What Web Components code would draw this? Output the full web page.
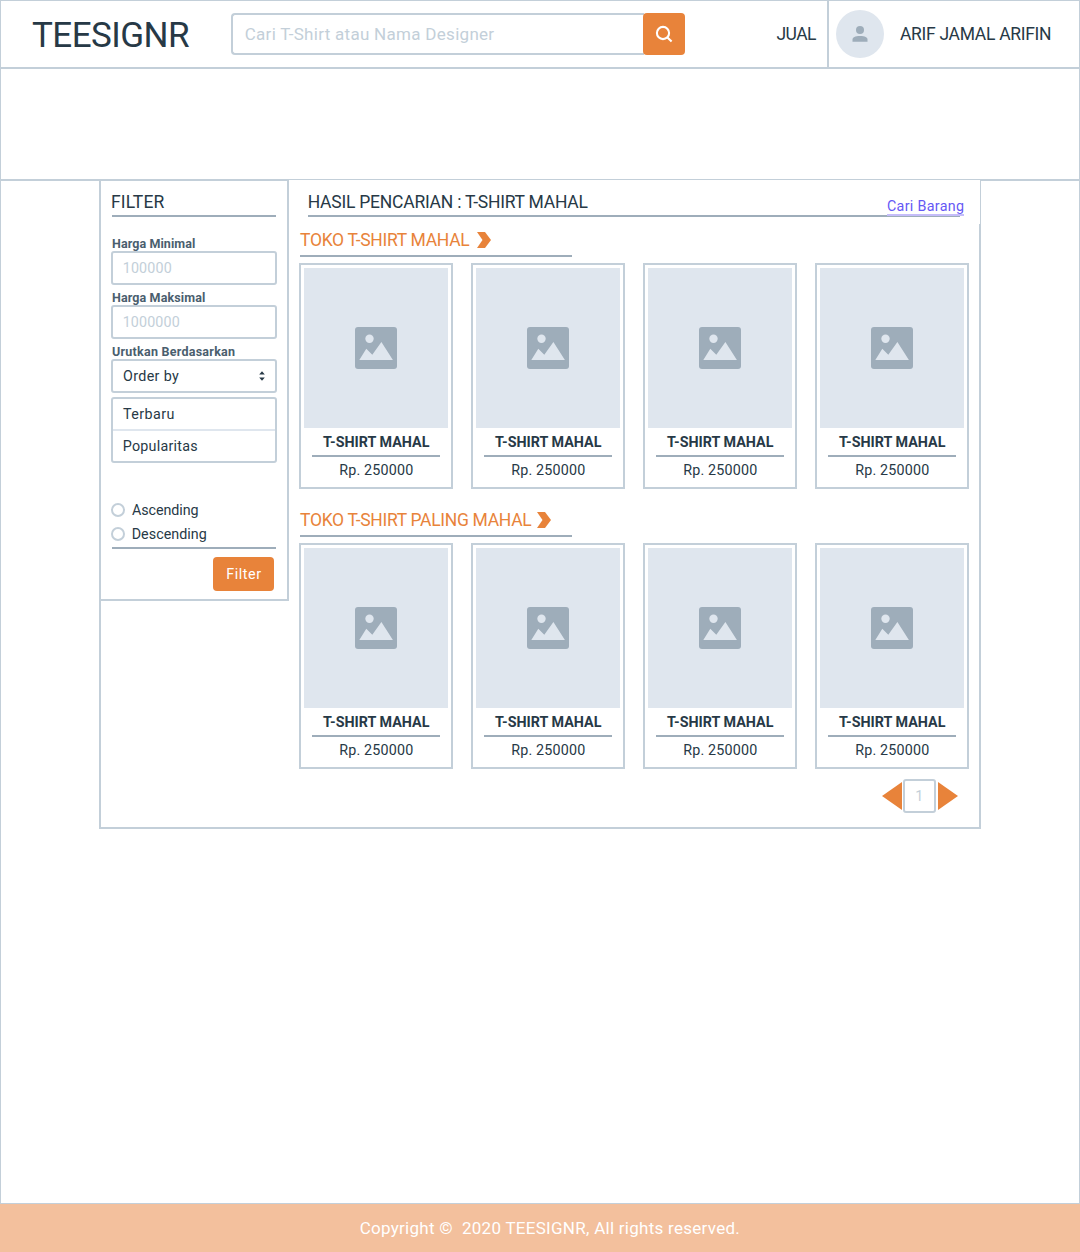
<!DOCTYPE html>
<html lang="id">
<head>
<meta charset="utf-8">
<title>TEESIGNR</title>
<style>
html,body{margin:0;padding:0;background:#fff}
body{font-family:Roboto,"Liberation Sans",sans-serif;color:#273946;
--line:#c3cfd9;--rule:#9eadba;--fill:#dfe6ee;--accent:#e8833a;--muted:#c3cfd9}
</style>
</head>
<body>
<tee-app></tee-app>
<script>
const ctx = document.createElement('canvas').getContext('2d');
const define = (name, html, setup) => customElements.define(name, class extends HTMLElement {
  connectedCallback() {
    if (this.shadowRoot) return;
    const root = this.attachShadow({mode: 'open'});
    const t = document.createElement('template');
    t.innerHTML = '<style>*{box-sizing:border-box}:host{display:block;box-sizing:border-box}</style>' + (typeof html === 'function' ? html(this) : html);
    root.append(t.content.cloneNode(true));
    if (setup) setup(this, root);
  }
});

/* Single-line text, tracked so that its ink fills the width in "w". */
define('ui-text', '<style>:host{flex:none;white-space:pre;line-height:20px;height:20px}span{display:inline-block}</style><span></span>', (el, root) => {
  const size = +el.getAttribute('size') || 14, weight = el.getAttribute('weight') || 400, w = +el.getAttribute('w');
  const s = el.getAttribute('text'), span = root.querySelector('span');
  ctx.font = `${weight} ${size}px Roboto`;
  const m = ctx.measureText(s), ink = m.actualBoundingBoxRight + m.actualBoundingBoxLeft;
  span.textContent = s;
  el.style.width = w + 'px';
  el.style.fontSize = size + 'px';
  el.style.fontWeight = weight;
  if (s.length > 1) span.style.letterSpacing = (w - ink) / (s.length - 1) + 'px';
  const nudge = weight == 400 && size < 20 && /^[HDPRC1F]/.test(s) && s !== 'FILTER' && s !== 'Cari Barang' ? 0.7 : 0;
  span.style.marginLeft = m.actualBoundingBoxLeft + nudge + 'px';
});

define('search-bar', `<style>
:host{display:flex;width:454px;height:42px}
.field{flex:1;border:2px solid var(--line);border-right:0;border-radius:4px 0 0 4px;display:flex;align-items:center;padding-left:12px;color:var(--muted)}
.go{width:42px;border-radius:4px;background:var(--accent);margin-left:-1px;display:grid;place-items:center}
</style><div class="field"><ui-text size="17" w="249" text="Cari T-Shirt atau Nama Designer"></ui-text></div>
<div class="go"><svg width="18" height="18" viewBox="0 0 18 18" fill="none" stroke="#fff" stroke-width="2.1"><circle cx="8" cy="8" r="6.1"/><path d="M12.2 12.2 16.6 16.6"/></svg></div>`);

define('user-badge', `<style>
:host{display:flex;align-items:center;height:66px;border-left:2px solid var(--line);padding-left:7px}
.a{width:48px;height:48px;border-radius:50%;background:var(--fill);display:grid;place-items:center;margin-right:16px}
</style><div class="a"><svg width="16" height="16" viewBox="0 0 16 16" fill="#9eadba"><circle cx="8" cy="4" r="4"/><path d="M.5 15.7v-2.2C.5 11.3 3 10 8 10s7.5 1.3 7.5 3.5v2.2z"/></svg></div>
<ui-text size="17.5" w="151" text="ARIF JAMAL ARIFIN"></ui-text>`);

define('top-bar', `<style>
:host{display:flex;align-items:center;height:68px;border-bottom:2px solid var(--line);padding-left:31px}
.logo{margin-top:3px}
search-bar{margin-left:42px;margin-right:91.5px}
user-badge{margin-left:11px}
</style><ui-text class="logo" size="35" w="157" text="TEESIGNR"></ui-text><search-bar></search-bar>
<ui-text size="17.5" w="39.5" text="JUAL"></ui-text><user-badge></user-badge>`);

define('input-field', el => `<style>
.l{height:17px;padding-left:1px;color:#4a5e6e;display:flex}
.b{height:34px;border:2px solid var(--line);border-radius:3px;display:flex;align-items:center;justify-content:space-between;padding:0 10px;color:${el.hasAttribute('select') ? 'inherit' : 'var(--muted)'}}
</style><div class="l"><ui-text size="12.5" weight="700" w="${el.getAttribute('lw')}" text="${el.getAttribute('label')}"></ui-text></div>
<div class="b"><ui-text size="14.3" w="${el.getAttribute('vw')}" text="${el.getAttribute('value')}"></ui-text>${el.hasAttribute('select') ? '<svg width="6" height="10" viewBox="0 0 6 10" fill="#273946"><path d="M3 .3 5.8 3.6H.2zM.2 6.4h5.6L3 9.7z"/></svg>' : ''}</div>`);

define('radio-option', el => `<style>
:host{display:flex;align-items:center;height:24px;gap:7px}
i{width:14px;height:14px;border:2px solid var(--line);border-radius:50%}
</style><i></i><ui-text size="14.3" w="${el.getAttribute('w')}" text="${el.getAttribute('text')}"></ui-text>`);

define('filter-panel', `<style>
:host{width:190px;height:422px;border:2px solid var(--line);padding:0 10px}
.head{height:36px;padding-top:11px;border-bottom:2px solid var(--rule);margin-left:1px;width:164px}
.fields{width:166px;padding-top:17px;display:flex;flex-direction:column;gap:3px}
.menu{margin-top:4px;width:166px;border:2px solid var(--line);border-radius:3px}
.menu div{height:30px;display:flex;align-items:center;padding-left:10px}
.menu div+div{border-top:2px solid var(--fill);height:32px}
.radios{padding-top:35px;height:84px}
.foot{margin-left:1px;width:164px;border-top:2px solid var(--rule);padding:8px 2px 0 0;display:flex;justify-content:flex-end}
.btn{width:61px;height:34px;border-radius:4px;background:var(--accent);color:#fff;display:grid;place-items:center}
</style>
<div class="head"><ui-text size="17.5" w="52.5" text="FILTER"></ui-text></div>
<div class="fields">
<input-field label="Harga Minimal" lw="83" value="100000" vw="48"></input-field>
<input-field label="Harga Maksimal" lw="93" value="1000000" vw="56"></input-field>
<input-field select label="Urutkan Berdasarkan" lw="123" value="Order by" vw="56"></input-field></div>
<div class="menu"><div><ui-text size="14.3" w="50.5" text="Terbaru"></ui-text></div><div><ui-text size="14.3" w="73.5" text="Popularitas"></ui-text></div></div>
<div class="radios"><radio-option text="Ascending" w="66.5"></radio-option><radio-option text="Descending" w="74"></radio-option></div>
<div class="foot"><div class="btn"><ui-text size="14.3" w="34" text="Filter"></ui-text></div></div>`);

define('product-card', `<style>
:host{width:154px;height:226px;border:2px solid var(--line);padding:3px;display:flex;flex-direction:column;align-items:center}
.pic{width:144px;height:160px;background:var(--fill);display:grid;place-items:center}
.name{width:128px;height:29px;padding:4px 0 0 1px;border-bottom:2px solid var(--rule);display:flex;justify-content:center}
.price{padding-top:3px}
</style><div class="pic"><svg width="42" height="42" viewBox="0 0 42 42"><rect width="42" height="42" rx="3" fill="#9eadba"/><circle cx="14.5" cy="11.7" r="4.2" fill="#dfe6ee"/><path d="M4.3 33 11.3 21.8 17.3 27.7 26.4 15 37.9 33z" fill="#dfe6ee"/></svg></div>
<div class="name"><ui-text size="14.3" weight="700" w="107" text="T-SHIRT MAHAL"></ui-text></div>
<div class="price"><ui-text size="14.3" w="73" text="Rp. 250000"></ui-text></div>`);

define('shop-row', el => `<style>
:host{height:280px;padding-left:10px}
.head{margin-left:1px;width:272px;height:33px;border-bottom:2px solid var(--rule);display:flex;align-items:center;color:var(--accent)}
svg{margin-left:${el.getAttribute('gap')}px}
.cards{display:flex;gap:18px;padding-top:6px}
</style><div class="head"><ui-text size="17.5" w="${el.getAttribute('w')}" text="${el.getAttribute('text')}"></ui-text><svg width="14" height="16" viewBox="0 0 14 16" fill="#e8833a"><path d="M0 0h8l6 8-6 8H0l5.5-8z"/></svg></div>
<div class="cards">${'<product-card></product-card>'.repeat(4)}</div>`);

define('page-switch', `<style>
:host{display:flex;align-items:center;justify-content:flex-end;padding-right:21px;height:34px}
.n{width:33px;height:34px;border:2px solid var(--line);border-radius:3px;margin:0 2px 0 1px;display:grid;place-items:center;color:var(--muted)}
</style><svg width="20" height="28" viewBox="0 0 20 28" fill="#e8833a"><path d="M20 0v28L0 14z"/></svg><div class="n"><ui-text size="14.3" w="8" text="1"></ui-text></div><svg width="20" height="28" viewBox="0 0 20 28" fill="#e8833a"><path d="M0 0v28l20-14z"/></svg>`);

define('results-panel', `<style>
:host{flex:1;display:flex;flex-direction:column}
.top{height:45px;border-top:1px solid var(--line);border-right:1px solid var(--line);padding-left:19px}
.bar{width:652px;height:37px;border-bottom:2px solid var(--rule);display:flex;justify-content:space-between;padding-top:12px}
.link{margin-right:-4px;margin-top:4px;height:20px;color:#6558f5;border-bottom:2px solid #c5bdf9}
.body{flex:1;border-right:2px solid var(--line)}
shop-row:last-of-type{height:275px}
</style><div class="top"><div class="bar"><ui-text size="17.5" w="279.5" text="HASIL PENCARIAN : T-SHIRT MAHAL"></ui-text><div class="link"><ui-text size="14.3" w="77" text="Cari Barang"></ui-text></div></div></div>
<div class="body"><shop-row text="TOKO T-SHIRT MAHAL" w="170" gap="7"></shop-row><shop-row text="TOKO T-SHIRT PALING MAHAL" w="232" gap="5"></shop-row><page-switch></page-switch></div>`);

define('tee-app', `<style>
:host{height:1252px;display:flex;flex-direction:column}
.page{flex:1;border:1px solid var(--line)}
.banner{height:112px;border-bottom:2px solid var(--line)}
.main{position:relative;width:882px;height:650px;margin:-2px 0 0 98px;background:#fff;display:flex;border-bottom:2px solid var(--line)}
.side{border-left:2px solid var(--line);width:190px}
filter-panel{margin-left:-2px}
footer{height:48px;background:#f3c09d;color:#fff;display:grid;place-items:center;padding-left:19px}
</style><div class="page"><top-bar></top-bar><div class="banner"></div>
<div class="main"><div class="side"><filter-panel></filter-panel></div><results-panel></results-panel></div></div>
<footer><ui-text size="17" w="379" text="Copyright ©  2020 TEESIGNR, All rights reserved."></ui-text></footer>`);
</script>
</body>
</html>
